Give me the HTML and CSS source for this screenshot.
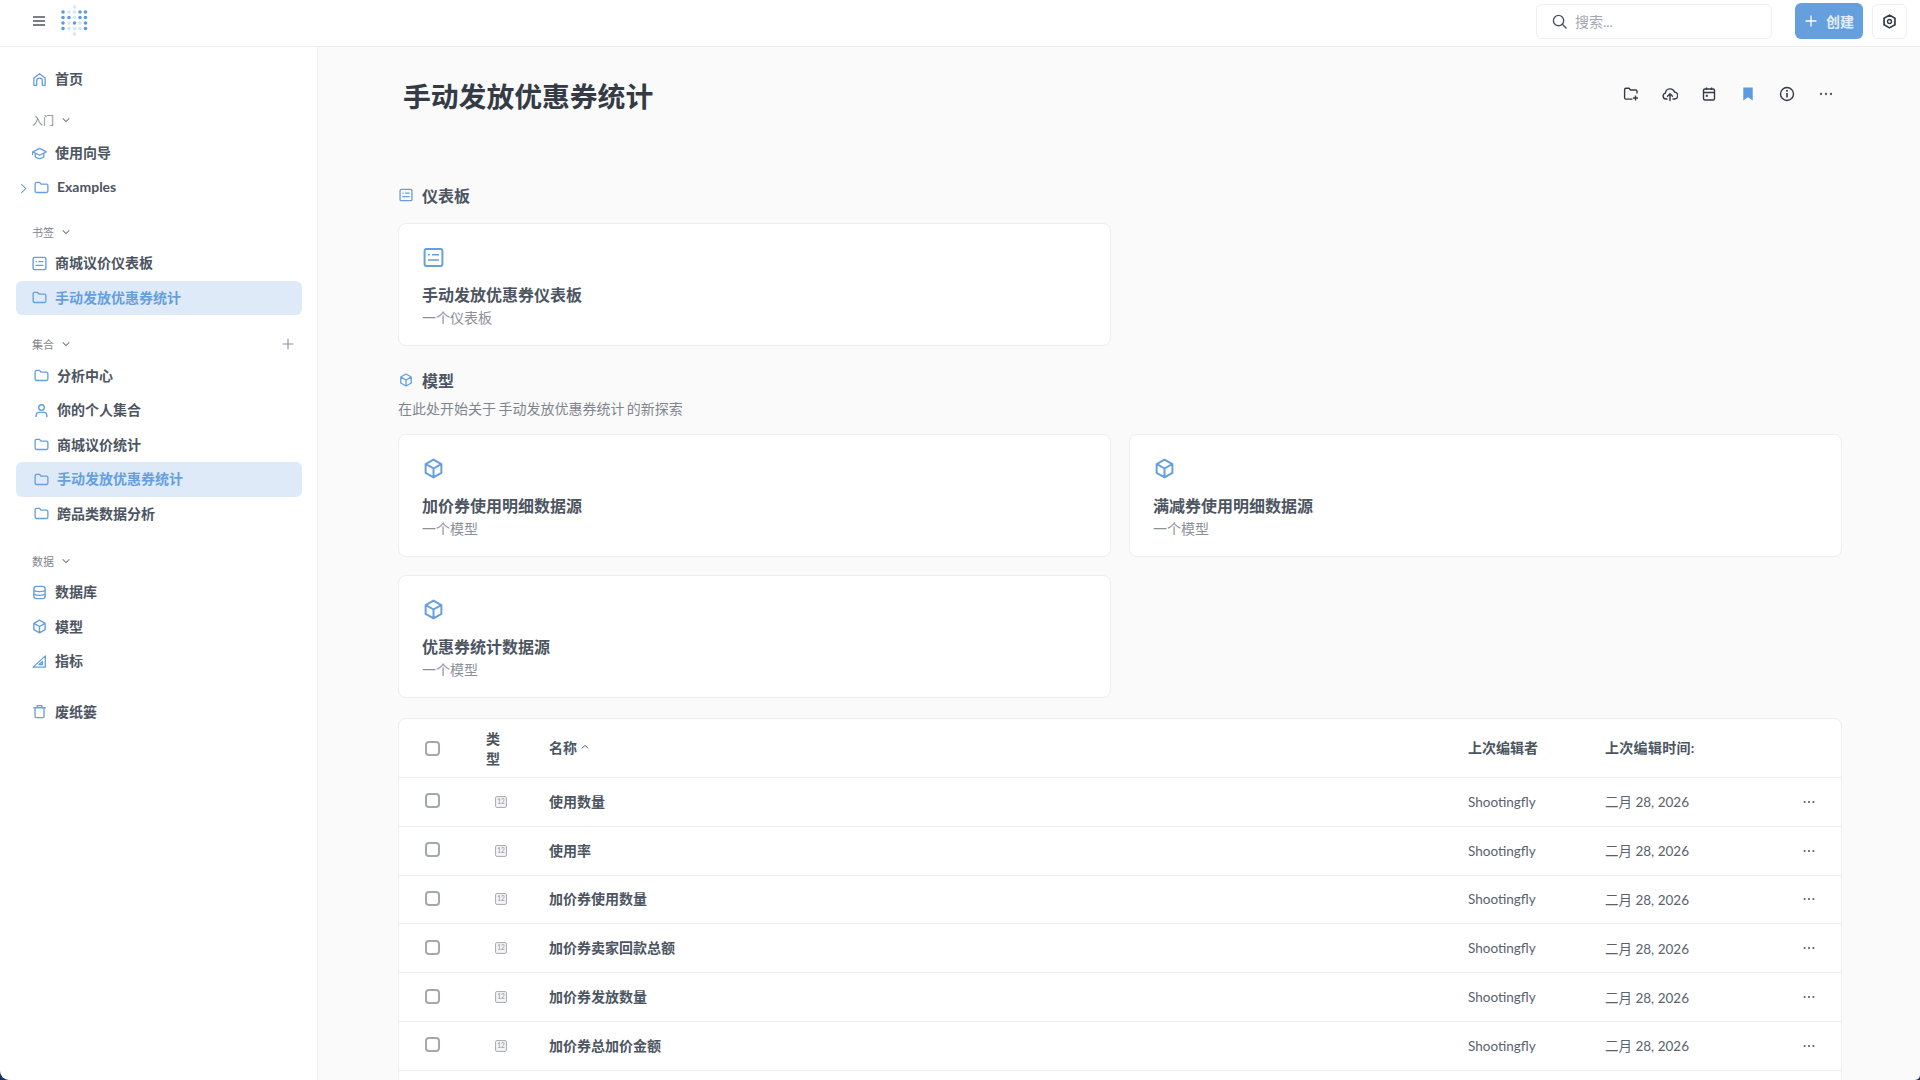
FILE: index.html
```html
<!DOCTYPE html>
<html lang="zh">
<head>
<meta charset="utf-8">
<title>手动发放优惠券统计</title>
<link rel="stylesheet" href="styles.css">
</head>
<body>
<svg class="defs" width="0" height="0" aria-hidden="true">
  <defs>
    <symbol id="i-folder" viewBox="0 0 16 16"><path d="M1.200 4c0-.9.7-1.500 1.500-1.500h3.200l1.500 1.800h5.900c.9 0 1.500.7 1.500 1.500v6c0 .9-.7 1.500-1.500 1.500H2.700c-.9 0-1.500-.7-1.500-1.500z" fill="none" stroke="currentColor" stroke-width="1.400" stroke-linejoin="round"/></symbol>
    <symbol id="i-dash" viewBox="0 0 16 16"><rect x="1.200" y="1.500" width="13.600" height="13" rx="1.500" fill="none" stroke="currentColor" stroke-width="1.500"/><path d="M3.800 5.900h1.400M6.800 5.900h5.400M3.800 9.900h8.400" fill="none" stroke="currentColor" stroke-width="1.300"/></symbol>
    <symbol id="i-cube" viewBox="0 0 16 16"><path d="M8 1.200l6 3.400v6.800l-6 3.400-6-3.400V4.600zM2.200 4.700L8 8l5.800-3.300M8 8v6.500" fill="none" stroke="currentColor" stroke-width="1.500" stroke-linejoin="round"/></symbol>
    <symbol id="i-num" viewBox="0 0 12 12"><rect x=".6" y=".6" width="10.800" height="10.800" rx="1.200" fill="#f4f5f6" stroke="#a4a8ae" stroke-width="1"/><text class="num-text" x="6" y="8.300" text-anchor="middle">12</text></symbol>
    <symbol id="i-dots" viewBox="0 0 16 16"><circle cx="3" cy="8" r="1.150" fill="currentColor"/><circle cx="8" cy="8" r="1.150" fill="currentColor"/><circle cx="13" cy="8" r="1.150" fill="currentColor"/></symbol>
    <symbol id="i-down" viewBox="0 0 10 10"><path d="M2 3.700l3 3 3-3" fill="none" stroke="currentColor" stroke-width="1.100" stroke-linecap="round" stroke-linejoin="round"/></symbol>
  </defs>
</svg>
<div class="app">
  <header class="topbar">
    <div class="brand">
      <svg class="menu-icon" viewBox="0 0 12 10" aria-hidden="true"><path d="M0 1h12M0 5h12M0 9h12" stroke="#4c5561" stroke-width="1.300" fill="none"/></svg>
      <svg class="logo" viewBox="0 0 27 32" aria-hidden="true">
        <g fill="#5c9be0">
          <circle cx="2" cy="7" r="1.800"/><circle cx="19" cy="7" r="1.800"/><circle cx="24.500" cy="7" r="1.800"/>
          <circle cx="2" cy="12.500" r="1.800"/><circle cx="8" cy="12.500" r="1.800"/><circle cx="19" cy="12.500" r="1.800"/><circle cx="24.500" cy="12.500" r="1.800"/>
          <circle cx="2" cy="18" r="1.800"/><circle cx="13.500" cy="18" r="1.800"/><circle cx="24.500" cy="18" r="1.800"/>
          <circle cx="2" cy="23.500" r="1.800"/><circle cx="24.500" cy="23.500" r="1.800"/>
        </g>
        <g fill="#d6e5f7">
          <circle cx="8" cy="7" r="1.800"/><circle cx="13.500" cy="2" r="1.800"/><circle cx="13.500" cy="7" r="1.800"/><circle cx="13.500" cy="12.500" r="1.800"/><circle cx="8" cy="18" r="1.800"/><circle cx="19" cy="18" r="1.800"/><circle cx="8" cy="23.500" r="1.800"/><circle cx="13.500" cy="23.500" r="1.800"/><circle cx="19" cy="23.500" r="1.800"/><circle cx="13.500" cy="29" r="1.800"/>
        </g>
      </svg>
    </div>
    <div class="top-actions">
      <div class="search">
        <svg class="search-icon" viewBox="0 0 16 16" aria-hidden="true"><circle cx="7" cy="7" r="5.500" fill="none" stroke="#4c5561" stroke-width="1.500"/><path d="M11 11l4 4" stroke="#4c5561" stroke-width="1.500" stroke-linecap="round"/></svg>
        <span>搜索...</span>
      </div>
      <button class="create" type="button">
        <svg viewBox="0 0 12 12" aria-hidden="true"><path d="M6 .5v11M.5 6h11" stroke="#fff" stroke-width="1.300" fill="none"/></svg>
        <span>创建</span>
      </button>
      <button class="gear" type="button" aria-label="设置">
        <svg viewBox="0 0 16 16" aria-hidden="true"><path d="M8 1.200l5.800 3.400v6.800L8 14.800l-5.800-3.400V4.600z" fill="none" stroke="#343b45" stroke-width="1.800" stroke-linejoin="round"/><circle cx="8" cy="8" r="2.100" fill="none" stroke="#343b45" stroke-width="1.500"/></svg>
      </button>
    </div>
  </header>
  <div class="body">
    <nav class="sidebar">
      <a class="nav-item"><svg class="nav-icon" viewBox="0 0 16 16" aria-hidden="true"><path d="M2 14.200V6.500L8 1.800l6 4.700v7.700h-3V9.500a3 3 0 0 0-6 0v4.700z" fill="none" stroke="currentColor" stroke-width="1.400" stroke-linejoin="round"/></svg><span>首页</span></a>

      <div class="nav-label l-intro"><span>入门</span><svg viewBox="0 0 10 10" aria-hidden="true"><use href="#i-down"/></svg></div>
      <a class="nav-item"><svg class="nav-icon" viewBox="0 0 16 16" aria-hidden="true"><path d="M.8 6.200L8 2.500l7.200 3.700L8 9.900zM3.500 8v3.700c2.600 2 6.400 2 9 0V8M.8 6.200c-.5 1.200-.5 2.300 0 3.500" fill="none" stroke="currentColor" stroke-width="1.400" stroke-linejoin="round"/></svg><span>使用向导</span></a>
      <a class="nav-item shifted"><svg class="caret" viewBox="0 0 8 12" aria-hidden="true"><path d="M1.500 1l5 5-5 5" fill="none" stroke="currentColor" stroke-width="1.200"/></svg><svg class="nav-icon" aria-hidden="true"><use href="#i-folder"/></svg><span>Examples</span></a>

      <div class="nav-label l-book"><span>书签</span><svg viewBox="0 0 10 10" aria-hidden="true"><use href="#i-down"/></svg></div>
      <a class="nav-item"><svg class="nav-icon" aria-hidden="true"><use href="#i-dash"/></svg><span>商城议价仪表板</span></a>
      <a class="nav-item active"><svg class="nav-icon" aria-hidden="true"><use href="#i-folder"/></svg><span>手动发放优惠券统计</span></a>

      <div class="nav-label l-coll"><span>集合</span><svg viewBox="0 0 10 10" aria-hidden="true"><use href="#i-down"/></svg><svg class="plus" viewBox="0 0 12 12" aria-hidden="true"><path d="M6 .5v11M.5 6h11" stroke="#8b9199" stroke-width="1.100" fill="none"/></svg></div>
      <a class="nav-item shifted"><svg class="nav-icon" aria-hidden="true"><use href="#i-folder"/></svg><span>分析中心</span></a>
      <a class="nav-item shifted"><svg class="nav-icon" viewBox="0 0 16 16" aria-hidden="true"><circle cx="8" cy="4.800" r="3" fill="none" stroke="currentColor" stroke-width="1.500"/><path d="M2.300 15v-1.700c0-2 1.500-3.300 3.300-3.300h4.800c1.800 0 3.300 1.300 3.300 3.300V15" fill="none" stroke="currentColor" stroke-width="1.500"/></svg><span>你的个人集合</span></a>
      <a class="nav-item shifted"><svg class="nav-icon" aria-hidden="true"><use href="#i-folder"/></svg><span>商城议价统计</span></a>
      <a class="nav-item shifted active"><svg class="nav-icon" aria-hidden="true"><use href="#i-folder"/></svg><span>手动发放优惠券统计</span></a>
      <a class="nav-item shifted"><svg class="nav-icon" aria-hidden="true"><use href="#i-folder"/></svg><span>跨品类数据分析</span></a>

      <div class="nav-label l-data"><span>数据</span><svg viewBox="0 0 10 10" aria-hidden="true"><use href="#i-down"/></svg></div>
      <a class="nav-item"><svg class="nav-icon" viewBox="0 0 16 16" aria-hidden="true"><rect x="2" y="1.500" width="12" height="13" rx="2.800" fill="none" stroke="currentColor" stroke-width="1.500"/><path d="M2 6c3 1.300 9 1.300 12 0M2 10c3 1.300 9 1.300 12 0" fill="none" stroke="currentColor" stroke-width="1.400"/></svg><span>数据库</span></a>
      <a class="nav-item"><svg class="nav-icon" aria-hidden="true"><use href="#i-cube"/></svg><span>模型</span></a>
      <a class="nav-item"><svg class="nav-icon" viewBox="0 0 16 16" aria-hidden="true"><path d="M14.200 2v12H1.200zM11.200 8v3.200H7.500z" fill="none" stroke="currentColor" stroke-width="1.400" stroke-linejoin="round"/></svg><span>指标</span></a>
      <a class="nav-item trash"><svg class="nav-icon" viewBox="0 0 16 16" aria-hidden="true"><path d="M1.500 4h13M5.500 4V1.800h5V4M3.200 4v9.300c0 .8.500 1.200 1.200 1.200h7.200c.7 0 1.200-.4 1.200-1.200V4" fill="none" stroke="currentColor" stroke-width="1.400" stroke-linejoin="round"/></svg><span>废纸篓</span></a>
    </nav>

    <main class="main">
      <div class="title-row">
        <h1>手动发放优惠券统计</h1>
        <div class="tools">
          <svg class="tool" viewBox="0 0 16 16" aria-hidden="true"><path d="M14 7.500V5.300c0-.7-.6-1.300-1.300-1.300H7.500L6 2.300H3C2.200 2.300 1.600 3 1.600 3.700v8c0 .8.600 1.400 1.400 1.400h6.500M12.500 9.500v5M10 12h5" fill="none" stroke="#343b45" stroke-width="1.400" stroke-linejoin="round"/></svg>
          <svg class="tool" viewBox="0 0 16 16" aria-hidden="true"><path d="M5 13H4a3 3 0 0 1-.6-5.900A4.700 4.700 0 0 1 12.500 6 3.500 3.500 0 0 1 12 13h-1M8 14.500V8M5.500 10.200L8 7.700l2.500 2.500" fill="none" stroke="#343b45" stroke-width="1.400" stroke-linecap="round" stroke-linejoin="round"/></svg>
          <svg class="tool" viewBox="0 0 16 16" aria-hidden="true"><rect x="2.500" y="3" width="11" height="11" rx="1.500" fill="none" stroke="#343b45" stroke-width="1.400"/><path d="M2.500 6.500h11M5.500 1.500V4M10.500 1.500V4" fill="none" stroke="#343b45" stroke-width="1.400"/><rect x="4.800" y="8.800" width="2" height="2" fill="#343b45"/></svg>
          <svg class="tool" viewBox="0 0 16 16" aria-hidden="true"><path d="M3.300 1.500h9.400v13L8 11.300 3.300 14.500z" fill="#5c9be0"/></svg>
          <svg class="tool" viewBox="0 0 16 16" aria-hidden="true"><circle cx="8" cy="8" r="6.500" fill="none" stroke="#343b45" stroke-width="1.400"/><path d="M8 7v4.500" stroke="#343b45" stroke-width="1.600"/><circle cx="8" cy="4.800" r="1" fill="#343b45"/></svg>
          <svg class="tool muted" aria-hidden="true"><use href="#i-dots"/></svg>
        </div>
      </div>

      <section class="section">
        <h2><svg class="sec-icon" aria-hidden="true"><use href="#i-dash"/></svg>仪表板</h2>
        <div class="cards dash-cards">
          <article class="card">
            <svg class="card-icon" aria-hidden="true"><use href="#i-dash"/></svg>
            <h3>手动发放优惠券仪表板</h3>
            <p>一个仪表板</p>
          </article>
        </div>
      </section>

      <section class="section models">
        <h2><svg class="sec-icon" aria-hidden="true"><use href="#i-cube"/></svg>模型</h2>
        <p class="sec-desc">在此处开始关于 手动发放优惠券统计 的新探索</p>
        <div class="cards">
          <article class="card">
            <svg class="card-icon" aria-hidden="true"><use href="#i-cube"/></svg>
            <h3>加价券使用明细数据源</h3>
            <p>一个模型</p>
          </article>
          <article class="card">
            <svg class="card-icon" aria-hidden="true"><use href="#i-cube"/></svg>
            <h3>满减券使用明细数据源</h3>
            <p>一个模型</p>
          </article>
          <article class="card">
            <svg class="card-icon" aria-hidden="true"><use href="#i-cube"/></svg>
            <h3>优惠券统计数据源</h3>
            <p>一个模型</p>
          </article>
        </div>
      </section>

      <section class="table">
        <div class="row head">
          <div class="c-check"><i class="check"></i></div>
          <div class="c-type">类型</div>
          <div class="c-name">名称<svg class="sort" viewBox="0 0 10 10" aria-hidden="true"><path d="M2 6.300l3-3 3 3" fill="none" stroke="currentColor" stroke-width="1"/></svg></div>
          <div class="c-editor">上次编辑者</div>
          <div class="c-date">上次编辑时间:</div>
          <div class="c-more"></div>
        </div>
        <div class="row">
          <div class="c-check"><i class="check"></i></div>
          <div class="c-type"><svg class="num" aria-hidden="true"><use href="#i-num"/></svg></div>
          <div class="c-name">使用数量</div>
          <div class="c-editor">Shootingfly</div>
          <div class="c-date">二月 28, 2026</div>
          <div class="c-more"><svg aria-hidden="true"><use href="#i-dots"/></svg></div>
        </div>
        <div class="row">
          <div class="c-check"><i class="check"></i></div>
          <div class="c-type"><svg class="num" aria-hidden="true"><use href="#i-num"/></svg></div>
          <div class="c-name">使用率</div>
          <div class="c-editor">Shootingfly</div>
          <div class="c-date">二月 28, 2026</div>
          <div class="c-more"><svg aria-hidden="true"><use href="#i-dots"/></svg></div>
        </div>
        <div class="row">
          <div class="c-check"><i class="check"></i></div>
          <div class="c-type"><svg class="num" aria-hidden="true"><use href="#i-num"/></svg></div>
          <div class="c-name">加价券使用数量</div>
          <div class="c-editor">Shootingfly</div>
          <div class="c-date">二月 28, 2026</div>
          <div class="c-more"><svg aria-hidden="true"><use href="#i-dots"/></svg></div>
        </div>
        <div class="row">
          <div class="c-check"><i class="check"></i></div>
          <div class="c-type"><svg class="num" aria-hidden="true"><use href="#i-num"/></svg></div>
          <div class="c-name">加价券卖家回款总额</div>
          <div class="c-editor">Shootingfly</div>
          <div class="c-date">二月 28, 2026</div>
          <div class="c-more"><svg aria-hidden="true"><use href="#i-dots"/></svg></div>
        </div>
        <div class="row">
          <div class="c-check"><i class="check"></i></div>
          <div class="c-type"><svg class="num" aria-hidden="true"><use href="#i-num"/></svg></div>
          <div class="c-name">加价券发放数量</div>
          <div class="c-editor">Shootingfly</div>
          <div class="c-date">二月 28, 2026</div>
          <div class="c-more"><svg aria-hidden="true"><use href="#i-dots"/></svg></div>
        </div>
        <div class="row">
          <div class="c-check"><i class="check"></i></div>
          <div class="c-type"><svg class="num" aria-hidden="true"><use href="#i-num"/></svg></div>
          <div class="c-name">加价券总加价金额</div>
          <div class="c-editor">Shootingfly</div>
          <div class="c-date">二月 28, 2026</div>
          <div class="c-more"><svg aria-hidden="true"><use href="#i-dots"/></svg></div>
        </div>
        <div class="row"></div>
      </section>
    </main>
  </div>
  <div class="corner left" aria-hidden="true"></div>
  <div class="corner right" aria-hidden="true"></div>
</div>
</body>
</html>
```
FILE: styles.css
```css
* { box-sizing: border-box; }
html, body { margin: 0; height: 100%; overflow: hidden; }
body {
  font-family: Lato, "Noto Sans CJK SC", sans-serif;
  color: #4c5561;
  background: #fafafb;
  font-size: 14px;
}
.defs { position: absolute; }
.app { position: relative; height: 1080px; display: flex; flex-direction: column; overflow: hidden; }

/* top bar */
.topbar {
  height: 47px;
  flex: none;
  background: #fff;
  border-bottom: 1px solid #eceef0;
  display: flex;
  align-items: center;
  justify-content: space-between;
  padding: 0 13px 4px 33px;
}
.brand { display: flex; align-items: center; gap: 16px; }
.menu-icon { width: 12px; height: 10px; }
.logo { width: 27px; height: 32px; }
.top-actions { display: flex; align-items: center; gap: 9px; }
.search {
  width: 236px;
  height: 35px;
  margin-right: 14px;
  border: 1px solid #eceef0;
  border-radius: 6px;
  background: #fff;
  display: flex;
  align-items: center;
  gap: 8px;
  padding-left: 15px;
  color: #a4a8ae;
}
.search-icon { width: 15px; height: 15px; }
.create {
  width: 68px;
  height: 36px;
  border: 0;
  border-radius: 6px;
  background: #659fde;
  color: #e4eefa;
  font: 700 14px Lato, "Noto Sans CJK SC", sans-serif;
  display: flex;
  align-items: center;
  gap: 9px;
  padding: 0 0 0 10px;
}
.create svg { width: 12px; height: 12px; }
.gear {
  width: 35px;
  height: 35px;
  padding: 0;
  border: 1px solid #eceef0;
  border-radius: 6px;
  background: #fff;
  display: flex;
  align-items: center;
  justify-content: center;
}
.gear svg { width: 15px; height: 15px; }

/* layout */
.body { flex: 1; display: flex; min-height: 0; }
.sidebar {
  width: 318px;
  flex: none;
  background: #fff;
  border-right: 1px solid #eceef0;
  padding: 15px 15px 0 16px;
  display: flex;
  flex-direction: column;
}
.nav-item {
  height: 34.500px;
  flex: none;
  display: flex;
  align-items: center;
  gap: 8px;
  padding-left: 16px;
  border-radius: 6px;
  color: #4c5561;
  font-weight: 700;
  position: relative;
}
.nav-item span { margin-top: -2px; }
.nav-item.shifted { padding-left: 18px; }
.nav-item.active { background: #deeaf7; color: #659fde; }
.nav-icon { width: 15px; height: 15px; color: #659fde; flex: none; }
.caret { position: absolute; left: 4px; top: 12px; width: 7px; height: 11px; color: #659fde; }
.nav-label {
  flex: none;
  height: 16px;
  display: flex;
  align-items: center;
  gap: 7px;
  padding-left: 16px;
  font-size: 11px;
  color: #7f858d;
  position: relative;
}
.nav-label > svg { width: 10px; height: 10px; color: #7f858d; }
.nav-label .plus { position: absolute; right: 8px; top: 2px; width: 12px; height: 12px; }
.l-intro { margin: 15px 0 8.500px; }
.l-book { margin: 19px 0 6px; }
.l-coll { margin: 20.500px 0 7px; }
.l-data { margin: 22px 0 6px; }
.trash { margin-top: 16px; }

/* main */
.main { flex: 1; min-width: 0; padding: 0 78px 0 80px; overflow: hidden; }
.title-row {
  height: 80px;
  display: flex;
  justify-content: space-between;
  align-items: center;
  padding: 20px 0 0 5px;
}
h1 { margin: 0; font-size: 27.800px; font-weight: 700; color: #343b45; line-height: 34px; }
.tools { display: flex; gap: 23px; padding: 0 8px 6px 0; }
.tool { width: 16px; height: 16px; }
.tool.muted { color: #4c5561; }
.section { margin-top: 0; }
h2 {
  margin: 0;
  height: 24px;
  display: flex;
  align-items: center;
  gap: 9px;
  font-size: 16px;
  font-weight: 700;
  color: #4c5561;
}
.sec-icon { width: 14px; height: 14px; color: #659fde; margin-left: 1px; }
.section:first-of-type { padding-top: 56px; }
.dash-cards { margin-top: 16px; }
.models { margin-top: 21.500px; }
.sec-desc { margin: 7px 0 15px; font-size: 14px; line-height: 20px; color: #7f858d; word-spacing: -1.200px; }
.cards { display: grid; grid-template-columns: 713px 713px; gap: 18px 18px; }
.card {
  height: 123px;
  background: #fff;
  border: 1px solid #eceef0;
  border-radius: 8px;
  padding: 23px 23px 0;
}
.card-icon { display: block; width: 21px; height: 21px; margin-left: 1px; color: #659fde; }
.card h3 { margin: 15px 0 0; font-size: 16px; line-height: 24px; font-weight: 700; color: #4c5561; }
.card p { margin: 1px 0 0; font-size: 14px; line-height: 20px; color: #8b9199; }

/* table */
.table {
  margin-top: 20.500px;
  width: 1444px;
  background: #fff;
  border: 1px solid #eceef0;
  border-radius: 8px 8px 0 0;
}
.row {
  height: 48.800px;
  display: grid;
  grid-template-columns: 71px 79px 919px 137px 1fr 39px;
  align-items: center;
  border-bottom: 1px solid #eceef0;
  color: #5a626d;
}
.row.head { height: 59px; font-weight: 700; color: #4c5561; }
.c-check { padding-left: 26px; }
.check {
  display: block;
  width: 15px;
  height: 15px;
  border: 2px solid #a4a8ae;
  border-radius: 4px;
  background: #fff;
  margin-top: -2px;
}
.head .check { margin-top: 0; }
.c-type { width: 16px; margin-left: 16px; line-height: 20px; font-weight: 700; }
.head .c-type { margin-top: 2px; }
.row:not(.head) .c-type { width: auto; margin-left: 25px; display: flex; }
.num { width: 12px; height: 12px; }
.num-text { font: 700 6.500px Lato, sans-serif; fill: #a4a8ae; }
.c-name { font-weight: 700; color: #4c5561; display: flex; align-items: center; gap: 3px; margin-top: -2px; }
.sort { width: 10px; height: 10px; }
.c-editor, .c-date { font-size: 13.500px; }
.c-date { margin-top: -1px; }
.head .c-editor, .head .c-date { font-size: 14px; font-weight: 700; margin-top: -3px; }
.head .c-date { letter-spacing: .3px; }
.c-more { display: flex; }
.c-more svg { width: 14px; height: 14px; color: #4c5561; }

/* rounded window corners showing the dark desktop behind */
.corner { position: absolute; bottom: 0; background: #1b2f63; }
.corner::after { content: ""; display: block; width: 100%; height: 100%; }
.corner.left { left: 0; width: 9px; height: 9px; }
.corner.left::after { background: #fff; border-bottom-left-radius: 9px; }
.corner.right { right: 0; width: 5px; height: 5px; }
.corner.right::after { background: #fafafb; border-bottom-right-radius: 5px; }
```
